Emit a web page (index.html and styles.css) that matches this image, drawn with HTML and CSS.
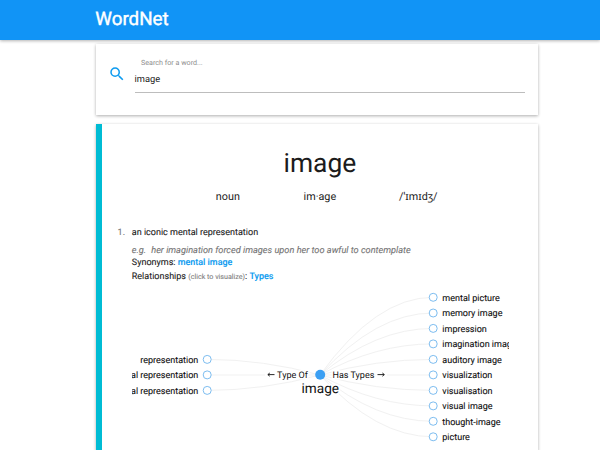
FILE: index.html
```
<!DOCTYPE html>
<html lang="en">
<head>
<meta charset="utf-8">
<title>WordNet</title>
<link rel="stylesheet" href="styles.css">
</head>
<body>
<header class="bar"><h1 class="brand">WordNet</h1></header>
<main class="content">
  <section class="card search">
    <svg class="search-icon" viewBox="0 0 24 24"><path d="M15.5 14h-.79l-.28-.27A6.47 6.47 0 0 0 16 9.5 6.5 6.5 0 1 0 9.5 16c1.61 0 3.09-.59 4.23-1.57l.27.28v.79l5 4.99L20.49 19l-4.99-5zm-6 0C7.01 14 5 11.99 5 9.5S7.01 5 9.5 5 14 7.01 14 9.5 11.99 14 9.5 14z"/></svg>
    <div class="field">
      <div class="label">Search for a word...</div>
      <div class="value">image</div>
    </div>
  </section>
  <section class="card entry">
    <h2 class="word">image</h2>
    <div class="facts"><span>noun</span><span>im·age</span><span>/ˈɪmɪdʒ/</span></div>
    <div class="sense">
      <div class="num">1.</div>
      <div class="detail">
        <div class="definition">an iconic mental representation</div>
        <div class="example"><span class="eg">e.g.</span>her imagination forced images upon her too awful to contemplate</div>
        <div class="line">Synonyms: <a>mental image</a></div>
        <div class="line">Relationships <small>(click to visualize)</small>: <a>Types</a></div>
      </div>
    </div>
    <svg class="graph" viewBox="132 285 377 165">
      <g class="links">
        <path d="M320 375Q263 359.4 207 359.4"/>
        <path d="M320 375H207"/>
        <path d="M320 375Q263 390.4 207 390.4"/>
        <path d="M320 375Q376 297.3 433 297.3"/>
        <path d="M320 375Q376 313 433 313"/>
        <path d="M320 375Q376 328.4 433 328.4"/>
        <path d="M320 375Q376 343.9 433 343.9"/>
        <path d="M320 375Q376 359.4 433 359.4"/>
        <path d="M320 375H433"/>
        <path d="M320 375Q376 390.4 433 390.4"/>
        <path d="M320 375Q376 405.9 433 405.9"/>
        <path d="M320 375Q376 421.3 433 421.3"/>
        <path d="M320 375Q376 436.8 433 436.8"/>
      </g>
      <g class="nodes">
        <circle cx="207.2" cy="359.4" r="4"/><circle cx="207.2" cy="374.9" r="4"/><circle cx="207.2" cy="390.4" r="4"/>
        <circle cx="433.2" cy="297.3" r="4"/><circle cx="433.2" cy="313" r="4"/><circle cx="433.2" cy="328.4" r="4"/><circle cx="433.2" cy="343.9" r="4"/><circle cx="433.2" cy="359.4" r="4"/><circle cx="433.2" cy="374.9" r="4"/><circle cx="433.2" cy="390.4" r="4"/><circle cx="433.2" cy="405.9" r="4"/><circle cx="433.2" cy="421.3" r="4"/><circle cx="433.2" cy="436.8" r="4"/>
      </g>
      <g class="ends left">
        <text x="198.3" y="362.6">representation</text><text x="198.3" y="378.1">al representation</text><text x="198.3" y="393.6">al representation</text>
        <text class="halo" x="307.8" y="378.1">Type Of</text>
      </g>
      <g class="ends">
        <text x="442.3" y="300.5">mental picture</text><text x="442.3" y="316.2">memory image</text><text x="442.3" y="331.6">impression</text><text x="442.3" y="347.1">imagination image</text><text x="442.3" y="362.6">auditory image</text><text x="442.3" y="378.1">visualization</text><text x="442.3" y="393.6">visualisation</text><text x="442.3" y="409.1">visual image</text><text x="442.3" y="424.5">thought-image</text><text x="442.3" y="440">picture</text>
        <text class="halo" x="332.5" y="378.1">Has Types</text>
      </g>
      <g class="arrows">
        <path class="mask" d="M265 375h12M376 375h11"/>
        <path d="M268 374.6h6.5M269.8 373l-2 1.6 2 1.6M377.5 374.6h6.5M382.4 373l2 1.6-2 1.6"/>
      </g>
      <text class="hub-name halo" x="320.3" y="392.5">image</text>
      <circle class="hub" cx="320.2" cy="374.8" r="5"/>
    </svg>
  </section>
</main>
</body>
</html>
```
FILE: styles.css
```
* { box-sizing: border-box; }
body {
  margin: 0;
  height: 450px;
  overflow: hidden;
  background: #fff;
  color: #1c1c1c;
  font-family: Roboto, "Noto Sans", sans-serif;
  text-rendering: geometricPrecision;
}
.bar {
  height: 39.5px;
  padding-left: 95.3px;
  background: #1194f6;
  box-shadow: 0 1px 3px rgba(0, 0, 0, .3);
}
.brand { margin: 0; color: #fff; font-size: 18.8px; font-weight: 400; line-height: 39px; -webkit-text-stroke: .4px #fff; }
.content { width: 442.5px; margin: 4px 0 0 95.6px; }
.card { background: #fff; box-shadow: 0 1px 3px rgba(0, 0, 0, .32); }
.search { display: flex; height: 71.5px; padding: 14px 13px 0 12px; }
.search-icon { width: 18px; height: 18px; margin: 7.5px 9px 0 0; fill: #0c9bf0; }
.field { flex: 1; height: 35px; border-bottom: 1px solid #bdbdbd; }
.label { padding-left: 6.5px; color: #8c8c8c; font-size: 7.15px; line-height: 10px; }
.value { margin-top: 6px; font-size: 9.3px; line-height: 12px; }
.entry { height: 327px; margin-top: 8.5px; padding-left: 16px; border-left: 6px solid #00bcd4; }
.word { margin: 0 0 0 -16px; padding-top: 24px; font-size: 26.4px; font-weight: 400; line-height: 32px; text-align: center; }
.facts { display: grid; grid-template-columns: 88px 96px 101px; justify-content: center; margin: 10px 0 0 -3px; font-size: 10.8px; line-height: 14px; text-align: center; }
.sense { display: flex; margin-top: 23.4px; font-size: 9.02px; line-height: 13px; -webkit-text-stroke: .1px; }
.num { width: 14.2px; color: #757575; }
.definition { margin-bottom: 4px; }
.example { color: #757575; font-size: 9.2px; font-style: italic; }
.eg { margin-right: 5px; }
.line small { color: #808080; font-size: 7.15px; }
.line a { color: #0c9bf0; font-size: 8.95px; font-weight: 500; }
.graph { display: block; width: 377px; height: 165px; margin: 1.3px 0 0 14.4px; overflow: hidden; }
.links path { fill: none; stroke: #f1f1f1; stroke-width: 1; }
.nodes circle { fill: #fff; stroke: #7dbdf0; stroke-width: 1; }
.hub { fill: #3b9ff3; }
.ends { fill: #111; font-size: 9px; stroke: #111; stroke-width: .1px; }
.left { text-anchor: end; }
.halo { paint-order: stroke; stroke: #fff; stroke-width: 3px; }
.arrows path { fill: none; stroke: #111; stroke-width: .9; }
.arrows .mask { stroke: #fff; stroke-width: 3; }
.hub-name { fill: #111; font-size: 13.6px; text-anchor: middle; }
```
